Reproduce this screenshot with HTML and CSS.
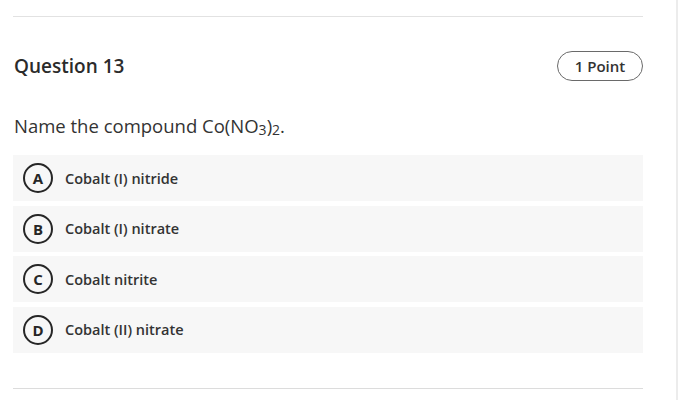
FILE: index.html
```html
<!DOCTYPE html>
<html lang="en">
<head>
<meta charset="utf-8">
<title>Question 13</title>
<link rel="stylesheet" href="styles.css">
</head>
<body>
<div class="page">
  <div class="quiz">
    <div class="rule rule-top"></div>
    <div class="header">
      <h2 class="title">Question 13</h2>
      <span class="points">1 Point</span>
    </div>
    <p class="prompt">Name the compound Co(NO<sub>3</sub>)<sub>2</sub>.</p>
    <div class="options">
      <div class="option"><span class="letter">A</span><span class="label">Cobalt (I) nitride</span></div>
      <div class="option"><span class="letter">B</span><span class="label">Cobalt (I) nitrate</span></div>
      <div class="option"><span class="letter">C</span><span class="label">Cobalt nitrite</span></div>
      <div class="option"><span class="letter">D</span><span class="label">Cobalt (II) nitrate</span></div>
    </div>
    <div class="rule rule-bottom"></div>
  </div>
</div>
</body>
</html>
```

FILE: styles.css
```css
html, body {
  margin: 0;
  padding: 0;
  background: #ffffff;
}

body {
  font-family: "Open Sans", "Noto Sans", sans-serif;
  color: #333333;
}

.page {
  width: 676px;
  height: 400px;
  border-right: 2px solid #ececec;
  overflow: hidden;
}

.quiz {
  margin-left: 13px;
  width: 630px;
  padding-top: 16px;
}

.rule {
  height: 1px;
  background: #e2e2e2;
}

.header {
  margin-top: 34px;
  height: 30px;
  display: flex;
  align-items: center;
  justify-content: space-between;
}

.title {
  margin: 0 0 0 1px;
  font-size: 19px;
  font-weight: 600;
  line-height: 24px;
  color: #2b2b2b;
}

.points {
  box-sizing: border-box;
  height: 30px;
  width: 86px;
  border: 1px solid #6a6a6a;
  border-radius: 15px;
  display: flex;
  align-items: center;
  justify-content: center;
  font-size: 15px;
  font-weight: 600;
  color: #333333;
}

.prompt {
  margin: 31px 0 0 1px;
  font-size: 18.5px;
  line-height: 28px;
  color: #333333;
}

.prompt sub {
  font-size: 14px;
  vertical-align: -2px;
  line-height: 0;
}

.options {
  margin-top: 15px;
  display: flex;
  flex-direction: column;
  gap: 4.5px;
}

.option {
  height: 46px;
  background: #f7f7f7;
  display: flex;
  align-items: center;
  padding-left: 10px;
}

.letter {
  flex: none;
  box-sizing: border-box;
  width: 30px;
  height: 30px;
  border: 2px solid #262626;
  border-radius: 50%;
  display: flex;
  align-items: center;
  justify-content: center;
  font-size: 15px;
  font-weight: 700;
  color: #262626;
}

.label {
  margin-left: 12px;
  font-size: 14.5px;
  font-weight: 600;
  color: #333333;
}

.rule-bottom {
  margin-top: 35px;
  background: #dcdcdc;
}
```
